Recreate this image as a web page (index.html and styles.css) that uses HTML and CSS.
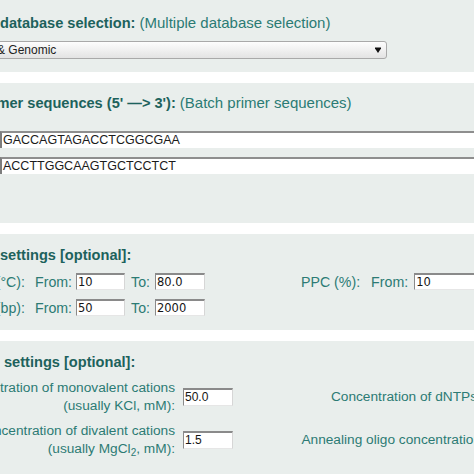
FILE: index.html
```html
<!DOCTYPE html>
<html>
<head>
<meta charset="utf-8">
<link rel="stylesheet" href="styles.css">
</head>
<body>
<div class="panel p1">
  <div class="head"><b>database selection:</b> <span class="hn">(Multiple database selection)</span></div>
  <div class="select"><span class="sel-text">&amp; Genomic</span><svg class="arrow" width="6" height="6" viewBox="0 0 6 6"><path d="M0 0.5h6v1L3 6 0 1.5z" fill="#111"/></svg></div>
</div>
<div class="panel p2">
  <div class="head cut"><b>Primer sequences (5' —&gt; 3'):</b> <span class="hn">(Batch primer sequences)</span></div>
  <div class="seq first">GACCAGTAGACCTCGGCGAA</div>
  <div class="seq">ACCTTGGCAAGTGCTCCTCT</div>
</div>
<div class="panel p3">
  <div class="head"><b>settings [optional]:</b></div>
  <div class="row3">
    <div class="lab3"><span>Tm (°C):</span></div>
    <span class="from">From:</span><div class="inp">10</div>
    <span class="to">To:</span><div class="inp w2">80.0</div>
    <span class="ppc">PPC (%):</span>
    <span class="from2">From:</span><div class="inp w3">10</div>
  </div>
  <div class="row3">
    <div class="lab3"><span>Product size (bp):</span></div>
    <span class="from">From:</span><div class="inp">50</div>
    <span class="to">To:</span><div class="inp w2">2000</div>
  </div>
</div>
<div class="panel p4">
  <div class="head h4"><b>settings [optional]:</b></div>
  <div class="row4 r1">
    <div class="lab4"><span>Concentration of monovalent cations</span><span>(usually KCl, mM):</span></div>
    <div class="inp4">50.0</div>
    <div class="rlab">Concentration of dNTPs</div>
  </div>
  <div class="row4 r2">
    <div class="lab4"><span>Concentration of divalent cations</span><span>(usually MgCl<sub>2</sub>, mM):</span></div>
    <div class="inp4">1.5</div>
    <div class="rlab r2lab">Annealing oligo concentration</div>
  </div>
</div>
</body>
</html>
```
FILE: styles.css
```css
html, body {
  margin: 0;
  overflow: hidden;
}
body {
  width: 474px;
  height: 474px;
  background: #ffffff;
  font-family: "Liberation Sans", Arial, sans-serif;
  color: #2c7b74;
}
.panel {
  background: #e9eeec;
}
.p1 { padding: 14px 0 13px; }
.p2 { margin-top: 11px; padding: 11px 0 49px; }
.p3 { margin-top: 11px; padding: 12px 0 14px; }
.p4 { margin-top: 11px; padding: 12px 0 20px; }

.head {
  font-size: 14.6px;
  line-height: 18px;
  white-space: nowrap;
}
.head b { color: #1d625c; }
.head .hn { color: #2b7b74; font-size: 15px; }
.head.cut { margin-left: -23px; }
.head.h4 { padding-left: 4px; }

.select {
  margin-top: 9px;
  margin-left: -10px;
  width: 397px;
  height: 18px;
  box-sizing: border-box;
  border: 1px solid #a9a9a9;
  border-radius: 3px;
  background: linear-gradient(#fdfdfd, #e3e3e3);
  display: flex;
  align-items: center;
  font-size: 12px;
  color: #222;
  white-space: nowrap;
}
.sel-text { padding-left: 6px; }
.arrow { margin-left: auto; margin-right: 5px; }

.seq {
  width: 500px;
  height: 17px;
  box-sizing: border-box;
  background: #fff;
  border-top: 2px solid #8e8e8e;
  border-left: 2px solid #7d7d7d;
  padding-left: 1px;
  font-size: 12.5px;
  line-height: 15px;
  color: #1b1b1b;
  margin-top: 9px;
}
.seq.first { margin-top: 19px; }

.row3 {
  display: flex;
  align-items: center;
  height: 17px;
  font-size: 14.2px;
  white-space: nowrap;
  margin-top: 9px;
}
.lab3 {
  width: 25px;
  flex: none;
  display: flex;
  justify-content: flex-end;
}
.from { margin-left: 10px; }
.to { margin-left: 6px; }
.ppc { margin-left: 96px; }
.from2 { margin-left: 11px; }

.inp, .inp4 {
  flex: none;
  box-sizing: border-box;
  background: #fff;
  border-style: solid;
  border-width: 2px 1px 1px 1px;
  border-color: #8a8a8a #d6d6d6 #e6e6e6 #8a8a8a;
  color: #151515;
}
.inp {
  width: 49px;
  height: 17px;
  margin-left: 4px;
  padding-left: 1px;
  font-family: "DejaVu Sans", sans-serif;
  font-size: 11.5px;
  line-height: 14px;
}
.inp.w2 { width: 50px; margin-left: 5px; }
.inp.w3 { width: 90px; margin-left: 6px; }

.row4 {
  display: flex;
  align-items: center;
  font-size: 13.7px;
  line-height: 18px;
  white-space: nowrap;
}
.row4.r1 { margin-top: 8px; }
.row4.r2 { margin-top: 7px; }
.lab4 {
  width: 175px;
  flex: none;
  display: flex;
  flex-direction: column;
  align-items: flex-end;
}
.lab4 sub {
  font-size: 10px;
  line-height: 0;
  vertical-align: -3px;
}
.inp4 {
  width: 50px;
  height: 18px;
  margin-left: 8px;
  padding-left: 1px;
  font-size: 12px;
  line-height: 15px;
}
.rlab {
  width: 244px;
  flex: none;
  text-align: right;
}
.rlab.r2lab { width: 248px; }
```
